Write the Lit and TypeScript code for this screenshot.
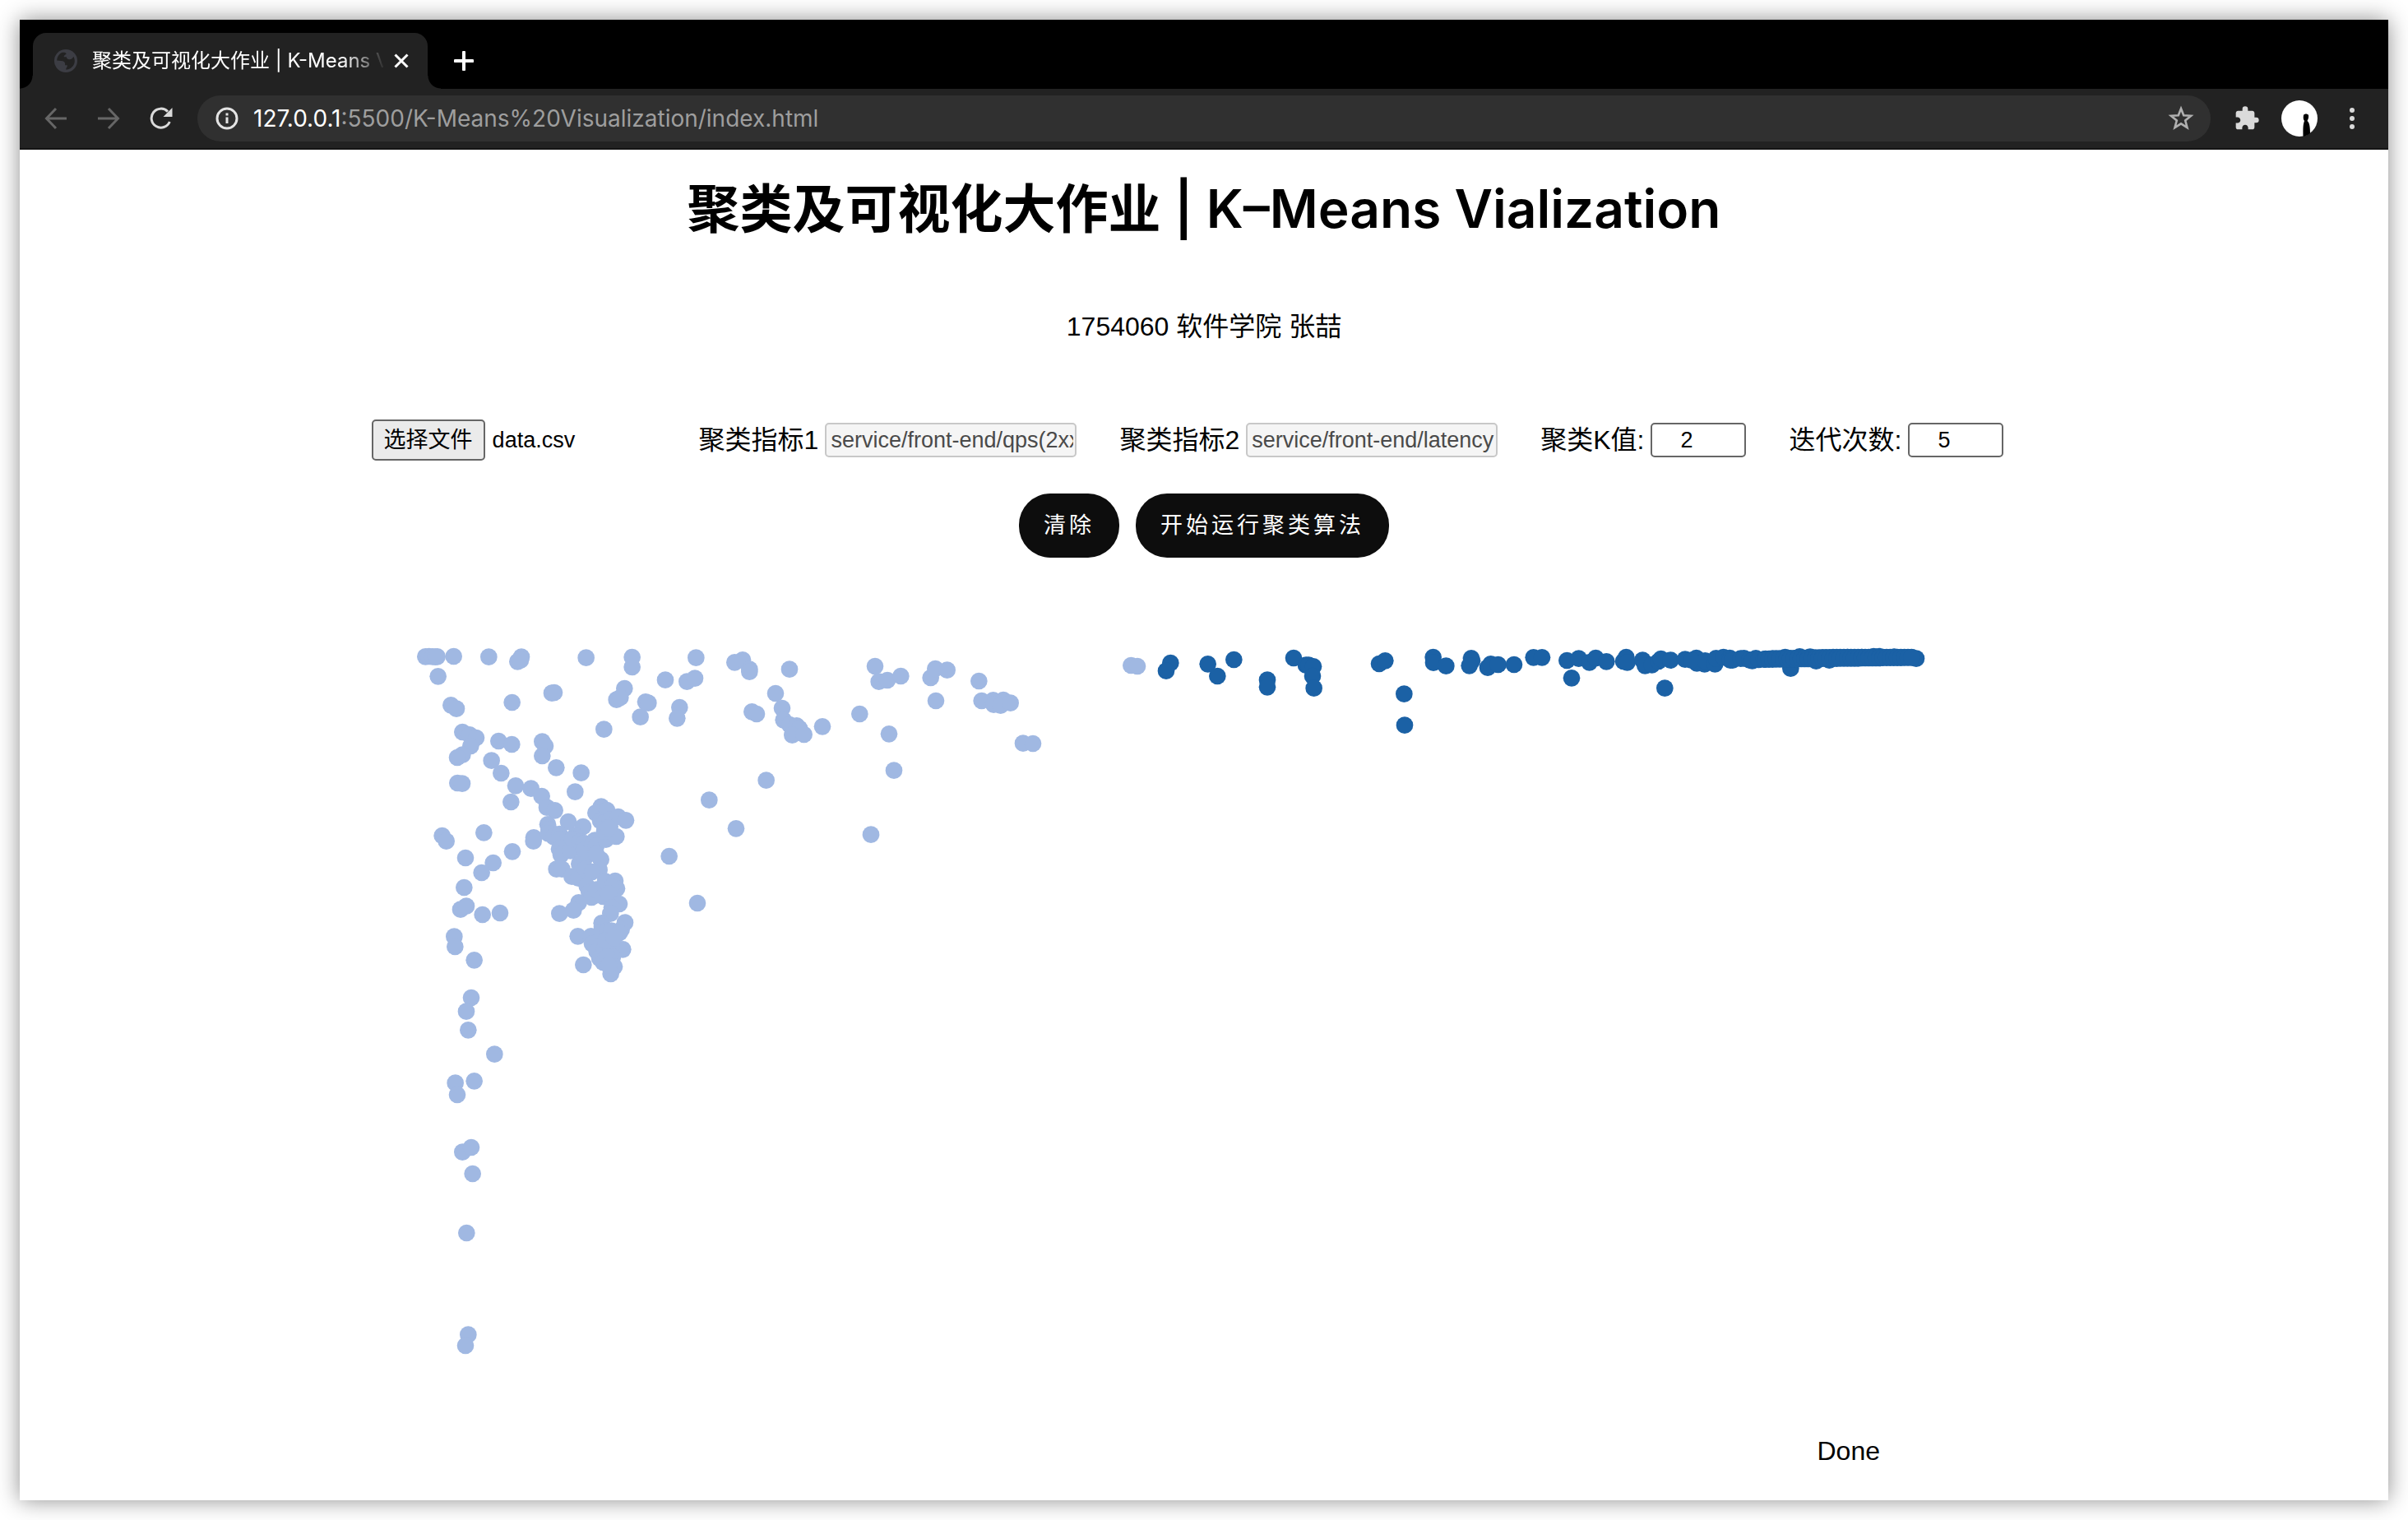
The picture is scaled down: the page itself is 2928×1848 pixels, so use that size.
import { LitElement, html, svg, css } from "lit";
import { customElement, property, state } from "lit/decorators.js";

type Point = [number, number];

const NEAR: Point[] = [
  [82, 85], [95, 84], [108, 85], [118, 86], [125, 85], [185, 84], [313, 86], [432, 86], [418, 103], [429, 98],
  [668, 89], [836, 87], [836, 123], [1069, 89], [128, 157], [175, 262], [195, 275], [398, 252], [543, 218],
  [552, 216], [808, 201], [779, 242], [793, 234], [885, 250], [895, 254], [866, 305], [957, 170], [1036, 176],
  [1065, 164], [1009, 270], [1000, 310], [733, 350], [217, 360], [243, 370], [267, 381], [247, 411], [217, 443],
  [198, 453], [199, 546], [216, 548], [349, 393], [397, 405], [323, 464], [358, 510], [411, 556], [394, 615],
  [467, 566], [506, 594], [525, 635], [554, 646], [508, 395], [519, 411], [508, 447], [559, 490], [650, 509],
  [628, 578], [1117, 608], [723, 632], [703, 655], [744, 645], [720, 684], [735, 690], [756, 680], [785, 669],
  [813, 682], [755, 705], [528, 697], [603, 687], [657, 705], [477, 745], [476, 758], [143, 738], [158, 758],
  [295, 727], [228, 819], [399, 796], [329, 837], [287, 873], [223, 927], [210, 1007], [231, 995], [290, 1026],
  [354, 1020], [187, 1106], [190, 1143], [260, 1192], [532, 715], [530, 730], [550, 742], [571, 732], [570, 752],
  [590, 765], [570, 787], [576, 808], [600, 770], [611, 793], [628, 738], [618, 750], [645, 760], [660, 765],
  [560, 860], [580, 860], [616, 887], [640, 893], [643, 841], [663, 820], [662, 790], [700, 755], [690, 770],
  [705, 775], [722, 825], [716, 863], [705, 805], [740, 752], [778, 741], [735, 722], [750, 710], [665, 860],
  [690, 870], [671, 922], [679, 945], [688, 963], [705, 935], [730, 960], [738, 905], [774, 903], [780, 931],
  [760, 925], [750, 950], [789, 987], [762, 1000], [757, 1022], [641, 982], [622, 1010], [571, 1022],
  [725, 1057], [726, 1070], [810, 1055], [638, 1105], [686, 1105], [690, 1132], [725, 1090], [745, 1085],
  [760, 1085], [797, 1080], [790, 1092], [802, 1153], [707, 1160], [717, 1185], [730, 1200], [735, 1150],
  [760, 1140], [765, 1180], [771, 1216], [758, 1242], [658, 1209], [745, 1180], [740, 1120], [770, 1110],
  [750, 1210], [971, 813], [1074, 984], [1210, 106], [1239, 97], [1264, 131], [1264, 140], [1410, 131],
  [1359, 219], [1273, 286], [1290, 294], [1383, 273], [1388, 316], [1410, 333], [1436, 337], [1446, 347],
  [1420, 371], [1463, 369], [1530, 340], [1325, 536], [1215, 712], [1722, 120], [1736, 176], [1767, 171],
  [1816, 156], [1925, 162], [1942, 129], [1985, 134], [1944, 246], [1666, 294], [1773, 367], [1791, 500],
  [1707, 734], [2101, 174], [2111, 246], [2153, 244], [2155, 260], [2190, 243], [2180, 263], [2216, 254],
  [2262, 401], [2298, 402], [249, 1329], [231, 1379], [238, 1447], [334, 1535], [191, 1640], [260, 1633],
  [198, 1683], [217, 1892], [249, 1875], [254, 1971], [232, 2187], [238, 2558], [228, 2598], [2656, 117],
  [2679, 120],
];

const FAR: Point[] = [
  [2800, 108], [2784, 137], [2936, 112], [2971, 156], [3031, 96], [3153, 170], [3153, 196], [3249, 90],
  [3294, 116], [3304, 116], [3321, 121], [3318, 156], [3323, 200], [3561, 111], [3583, 100], [3652, 221],
  [3654, 335], [3758, 87], [3759, 107], [3805, 119], [3897, 91], [3900, 100], [3890, 118], [3957, 125],
  [3968, 112], [3995, 114], [4053, 114], [4124, 88], [4155, 88], [4246, 99], [4289, 92], [4328, 106],
  [4351, 90], [4390, 103], [4452, 102], [4462, 87], [4466, 106], [4263, 163], [4522, 98], [4531, 118],
  [4556, 115], [4580, 102], [4589, 93], [4624, 98], [4603, 200], [4677, 95], [4718, 90], [4720, 109],
  [4748, 112], [4700, 98], [4750, 100], [4786, 112], [4790, 91], [4817, 87], [4840, 90], [4842, 98],
  [4850, 98], [4880, 92], [4892, 91], [4912, 97], [4935, 91], [4922, 100], [4945, 96], [4965, 95],
  [5062, 128], [5042, 87], [5095, 85], [5133, 86], [5155, 101], [5203, 98], [5270, 87], [5322, 87],
  [5365, 84], [5385, 84], [5440, 86], [5520, 92],
];

/* Saturated tail of the second cluster: closely spaced samples along a narrow band. */
const TAIL: Point[] = Array.from({ length: 42 }, (_, i) => {
  const x = 4970 + i * 13;
  const t = i / 41;
  return [
    [x, Math.round(93 - 6 * Math.min(1, t * 2))] as Point,
    [x, Math.round(95 - 7 * t)] as Point,
  ];
}).flat();

@customElement("browser-chrome")
class BrowserChrome extends LitElement {
  @property() pageTitle = "";

  static styles = css`
    :host { display: block; font-family: Inter, "Noto Sans CJK SC", sans-serif; color: #fff; }
    button { font: inherit; color: inherit; background: none; border: 0; padding: 0; margin: 0; display: flex; align-items: center; justify-content: center; }
    svg { display: block; }
    .strip { display: flex; align-items: flex-end; height: 84px; background: #000; padding-left: 16px; }
    .tab { position: relative; display: flex; align-items: center; width: 480px; height: 68px; box-sizing: border-box; padding: 0 20px 0 26px; background: #222; border-radius: 16px 16px 0 0; }
    .tab::before, .tab::after { content: ""; position: absolute; bottom: 0; width: 16px; height: 16px; }
    .tab::before { left: -16px; background: radial-gradient(circle at 0 0, #000 15px, #222 16px); }
    .tab::after { right: -16px; background: radial-gradient(circle at 100% 0, #000 15px, #222 16px); }
    .name { flex: 1; min-width: 0; margin-left: 18px; margin-right: 10px; overflow: hidden; white-space: nowrap; font-size: 24px; line-height: 36px; -webkit-mask-image: linear-gradient(90deg, #000 86%, transparent 101%); }
    .close { width: 24px; height: 24px; }
    .add { width: 56px; height: 68px; margin-left: 16px; }
    .bar { display: flex; align-items: center; height: 72px; background: #222; border-bottom: 2px solid #141414; padding: 0 22px 0 24px; }
    .nav { width: 40px; height: 40px; margin-right: 24px; }
    .omni { flex: 1; display: flex; align-items: center; height: 56px; box-sizing: border-box; padding: 0 20px; border-radius: 28px; background: #303030; }
    .url { flex: 1; margin-left: 16px; font-size: 28px; line-height: 40px; color: #9e9e9e; white-space: nowrap; }
    .host { color: #fff; }
    .ext { width: 32px; height: 32px; margin-left: 28px; }
    .who { width: 44px; height: 44px; margin-left: 26px; }
    .more { width: 44px; height: 44px; margin-left: 20px; }
  `;

  render() {
    return html`
      <div class="strip">
        <div class="tab">
          <svg width="28" height="28" viewBox="0 0 28 28">
            <circle cx="14" cy="14" r="14" fill="#3c3d44" />
            <path d="M9.500 3.800C6 5.500 3.300 9 3.200 13.600l5.300.400c2.800.200 4.600 1.200 4.600 3.400v1.800h2.600c.600 2-1.200 3-1.700 5.400 5.800 0 10.800-4.400 10.800-10.600 0-1.800-.600-3.700-1.500-5.200-.800 2.400-2.500 3.400-4.700 3.400-2.600 0-3.700-1.400-3.700-3h-3c-1-1.900 2.600-2.600 2.600-3.900 0-1-1.500-1.800-5-1.500z" fill="#222" />
          </svg>
          <span class="name">${this.pageTitle}</span>
          <button class="close" aria-label="Close tab">
            <svg width="18" height="18" viewBox="0 0 18 18"><path d="M1.500 1.500l15 15M16.500 1.500l-15 15" stroke="#fff" stroke-width="3" /></svg>
          </button>
        </div>
        <button class="add" aria-label="New tab">
          <svg width="24" height="24" viewBox="0 0 24 24"><path d="M12 1.500v21M1.500 12h21" stroke="#fff" stroke-width="4" stroke-linecap="round" /></svg>
        </button>
      </div>
      <div class="bar">
        <button class="nav" aria-label="Back">
          <svg width="28" height="28" viewBox="0 0 28 28"><path d="M27 14H2.500M14 2L2.500 14 14 26" fill="none" stroke="#666" stroke-width="3" /></svg>
        </button>
        <button class="nav" aria-label="Forward">
          <svg width="28" height="28" viewBox="0 0 28 28"><path d="M1 14h24.500M14 2l11.500 12L14 26" fill="none" stroke="#666" stroke-width="3" /></svg>
        </button>
        <button class="nav" aria-label="Reload">
          <svg width="28" height="28" viewBox="0 0 28 28">
            <path d="M24.300 18A11.500 11.500 0 1 1 22 5.700" fill="none" stroke="#dadada" stroke-width="3" />
            <path d="M27.500 1v11H16.500z" fill="#dadada" />
          </svg>
        </button>
        <div class="omni">
          <svg width="32" height="32" viewBox="0 0 32 32">
            <circle cx="16" cy="16" r="12" fill="none" stroke="#e4e4e4" stroke-width="3" />
            <path d="M16 14.500v7.500M16 9.500v3" stroke="#e4e4e4" stroke-width="3" />
          </svg>
          <span class="url"><span class="host">127.0.0.1</span>:5500/K-Means%20Visualization/index.html</span>
          <button aria-label="Bookmark">
            <svg width="32" height="32" viewBox="0 0 32 32">
              <path d="M16 4l3.200 8.300 8.900.500-6.900 5.700 2.300 8.600L16 22.300l-7.500 4.800 2.300-8.600-6.900-5.700 8.900-.500z" fill="none" stroke="#b0b0b0" stroke-width="2.600" />
            </svg>
          </button>
        </div>
        <button class="ext" aria-label="Extensions">
          <svg width="32" height="32" viewBox="0 0 24 24">
            <path d="M20.500 11H19V7c0-1.100-.900-2-2-2h-4V3.500a2.500 2.500 0 0 0-5 0V5H4c-1.100 0-1.990.900-1.990 2v3.800H3.500c1.490 0 2.700 1.210 2.700 2.700s-1.210 2.700-2.700 2.700H2V20c0 1.100.900 2 2 2h3.800v-1.500c0-1.490 1.210-2.700 2.700-2.700 1.490 0 2.700 1.210 2.700 2.700V22H17c1.100 0 2-.900 2-2v-4h1.500a2.500 2.500 0 0 0 0-5z" fill="#dadada" />
          </svg>
        </button>
        <button class="who" aria-label="Profile">
          <svg width="44" height="44" viewBox="0 0 44 44">
            <circle cx="22" cy="22" r="22" fill="#fff" />
            <path d="M27 18c1-2 5-2 6 0 .500 3-.500 5-1.500 7 3 2 3.500 9 3.500 15-2.500 2-6 3.500-8.500 4 0-7-.500-14 1.500-19-1.500-2-1.500-4-1-7z" fill="#000" />
          </svg>
        </button>
        <button class="more" aria-label="Menu">
          <svg width="8" height="28" viewBox="0 0 8 28" fill="#dadada"><circle cx="4" cy="4" r="3" /><circle cx="4" cy="14" r="3" /><circle cx="4" cy="24" r="3" /></svg>
        </button>
      </div>
    `;
  }
}

@customElement("cluster-plot")
class ClusterPlot extends LitElement {
  @property({ attribute: false }) clusters: { color: string; points: Point[] }[] = [];

  static styles = css`
    :host { display: block; }
    svg { display: block; width: 100%; height: auto; }
  `;

  render() {
    return html`
      <svg viewBox="0 0 5844 2790" role="img" aria-label="K-Means">
        ${this.clusters.map(
          (c) => svg`<g fill=${c.color}>${c.points.map(([x, y]) => svg`<circle cx=${x} cy=${y} r="31" />`)}</g>`
        )}
      </svg>
    `;
  }
}

@customElement("app-root")
class AppRoot extends LitElement {
  @state() private status = "Done";
  @state() private clusters = [
    { color: "#a0b8e2", points: NEAR },
    { color: "#1b61a5", points: [...FAR, ...TAIL] },
  ];

  static styles = css`
    :host { display: block; box-sizing: border-box; min-height: 100vh; padding: 24px; background: #fff; color: #000; font-family: "Liberation Sans", "Noto Sans CJK SC", sans-serif; }
    .window { min-height: calc(100vh - 48px); background: #fff; box-shadow: 0 0 26px rgba(0, 0, 0, 0.45); }
    .page { display: flex; flex-direction: column; align-items: center; padding: 26px 0 40px; }
    h1 { margin: 0; font-family: Inter, "Noto Sans CJK SC", sans-serif; font-size: 64px; line-height: 92px; font-weight: 600; text-align: center; }
    .author { margin: 75px 0 0; font-size: 32px; line-height: 44px; }
    .controls { display: flex; align-items: center; gap: 52px; margin-top: 91px; padding-right: 40px; font-size: 32px; line-height: 44px; }
    .file { display: flex; align-items: center; gap: 9px; width: 346px; height: 50px; font-size: 27px; line-height: 36px; }
    .pick { position: relative; box-sizing: border-box; height: 50px; padding: 5px 13px; border: 2px solid #666; border-radius: 5px; background: #ebebeb; white-space: nowrap; }
    .pick input { position: absolute; inset: 0; width: 100%; opacity: 0; }
    .field { display: flex; align-items: center; gap: 8px; white-space: nowrap; }
    .field input { box-sizing: border-box; width: 306px; height: 42px; margin: 0; padding: 0 2px 0 5px; border: 2px solid #666; border-radius: 5px; background: #fff; color: #000; font-family: inherit; font-size: 27px; line-height: 36px; }
    .field input:disabled { border-color: #c8c8c8; background: #f5f5f5; color: #4a4a4a; }
    .field input.count { width: 116px; padding: 0 8px 0 34px; }
    .actions { display: flex; gap: 20px; margin-top: 40px; }
    .actions button { height: 78px; padding: 0 30px; border: 0; border-radius: 38px; background: #0d0d0d; color: #fff; font-family: inherit; font-size: 27px; line-height: 36px; letter-spacing: 4px; }
    .plot { width: 100%; max-width: 1948px; margin-top: 92px; }
    .foot { display: flex; justify-content: flex-end; box-sizing: border-box; width: 100%; max-width: 1948px; margin-top: 44px; padding-right: 152px; font-size: 32px; line-height: 40px; }
  `;

  render() {
    return html`
      <div class="window">
        <browser-chrome .pageTitle=${"聚类及可视化大作业 | K-Means Vialization"}></browser-chrome>
        <main class="page">
          <h1>聚类及可视化大作业 | K–Means Vialization</h1>
          <p class="author">1754060 软件学院 张喆</p>
          <div class="controls">
            <div class="file">
              <label class="pick">选择文件<input type="file" accept=".csv" /></label>
              <span>data.csv</span>
            </div>
            <div class="field">
              <label for="m1">聚类指标1</label>
              <input id="m1" type="text" disabled value="service/front-end/qps(2xx)" />
            </div>
            <div class="field">
              <label for="m2">聚类指标2</label>
              <input id="m2" type="text" disabled value="service/front-end/latency" />
            </div>
            <div class="field">
              <label for="k">聚类K值:</label>
              <input id="k" class="count" type="number" value="2" />
            </div>
            <div class="field">
              <label for="n">迭代次数:</label>
              <input id="n" class="count" type="number" value="5" />
            </div>
          </div>
          <div class="actions">
            <button type="button">清除</button>
            <button type="button">开始运行聚类算法</button>
          </div>
          <cluster-plot class="plot" .clusters=${this.clusters}></cluster-plot>
          <div class="foot"><output>${this.status}</output></div>
        </main>
      </div>
    `;
  }
}
